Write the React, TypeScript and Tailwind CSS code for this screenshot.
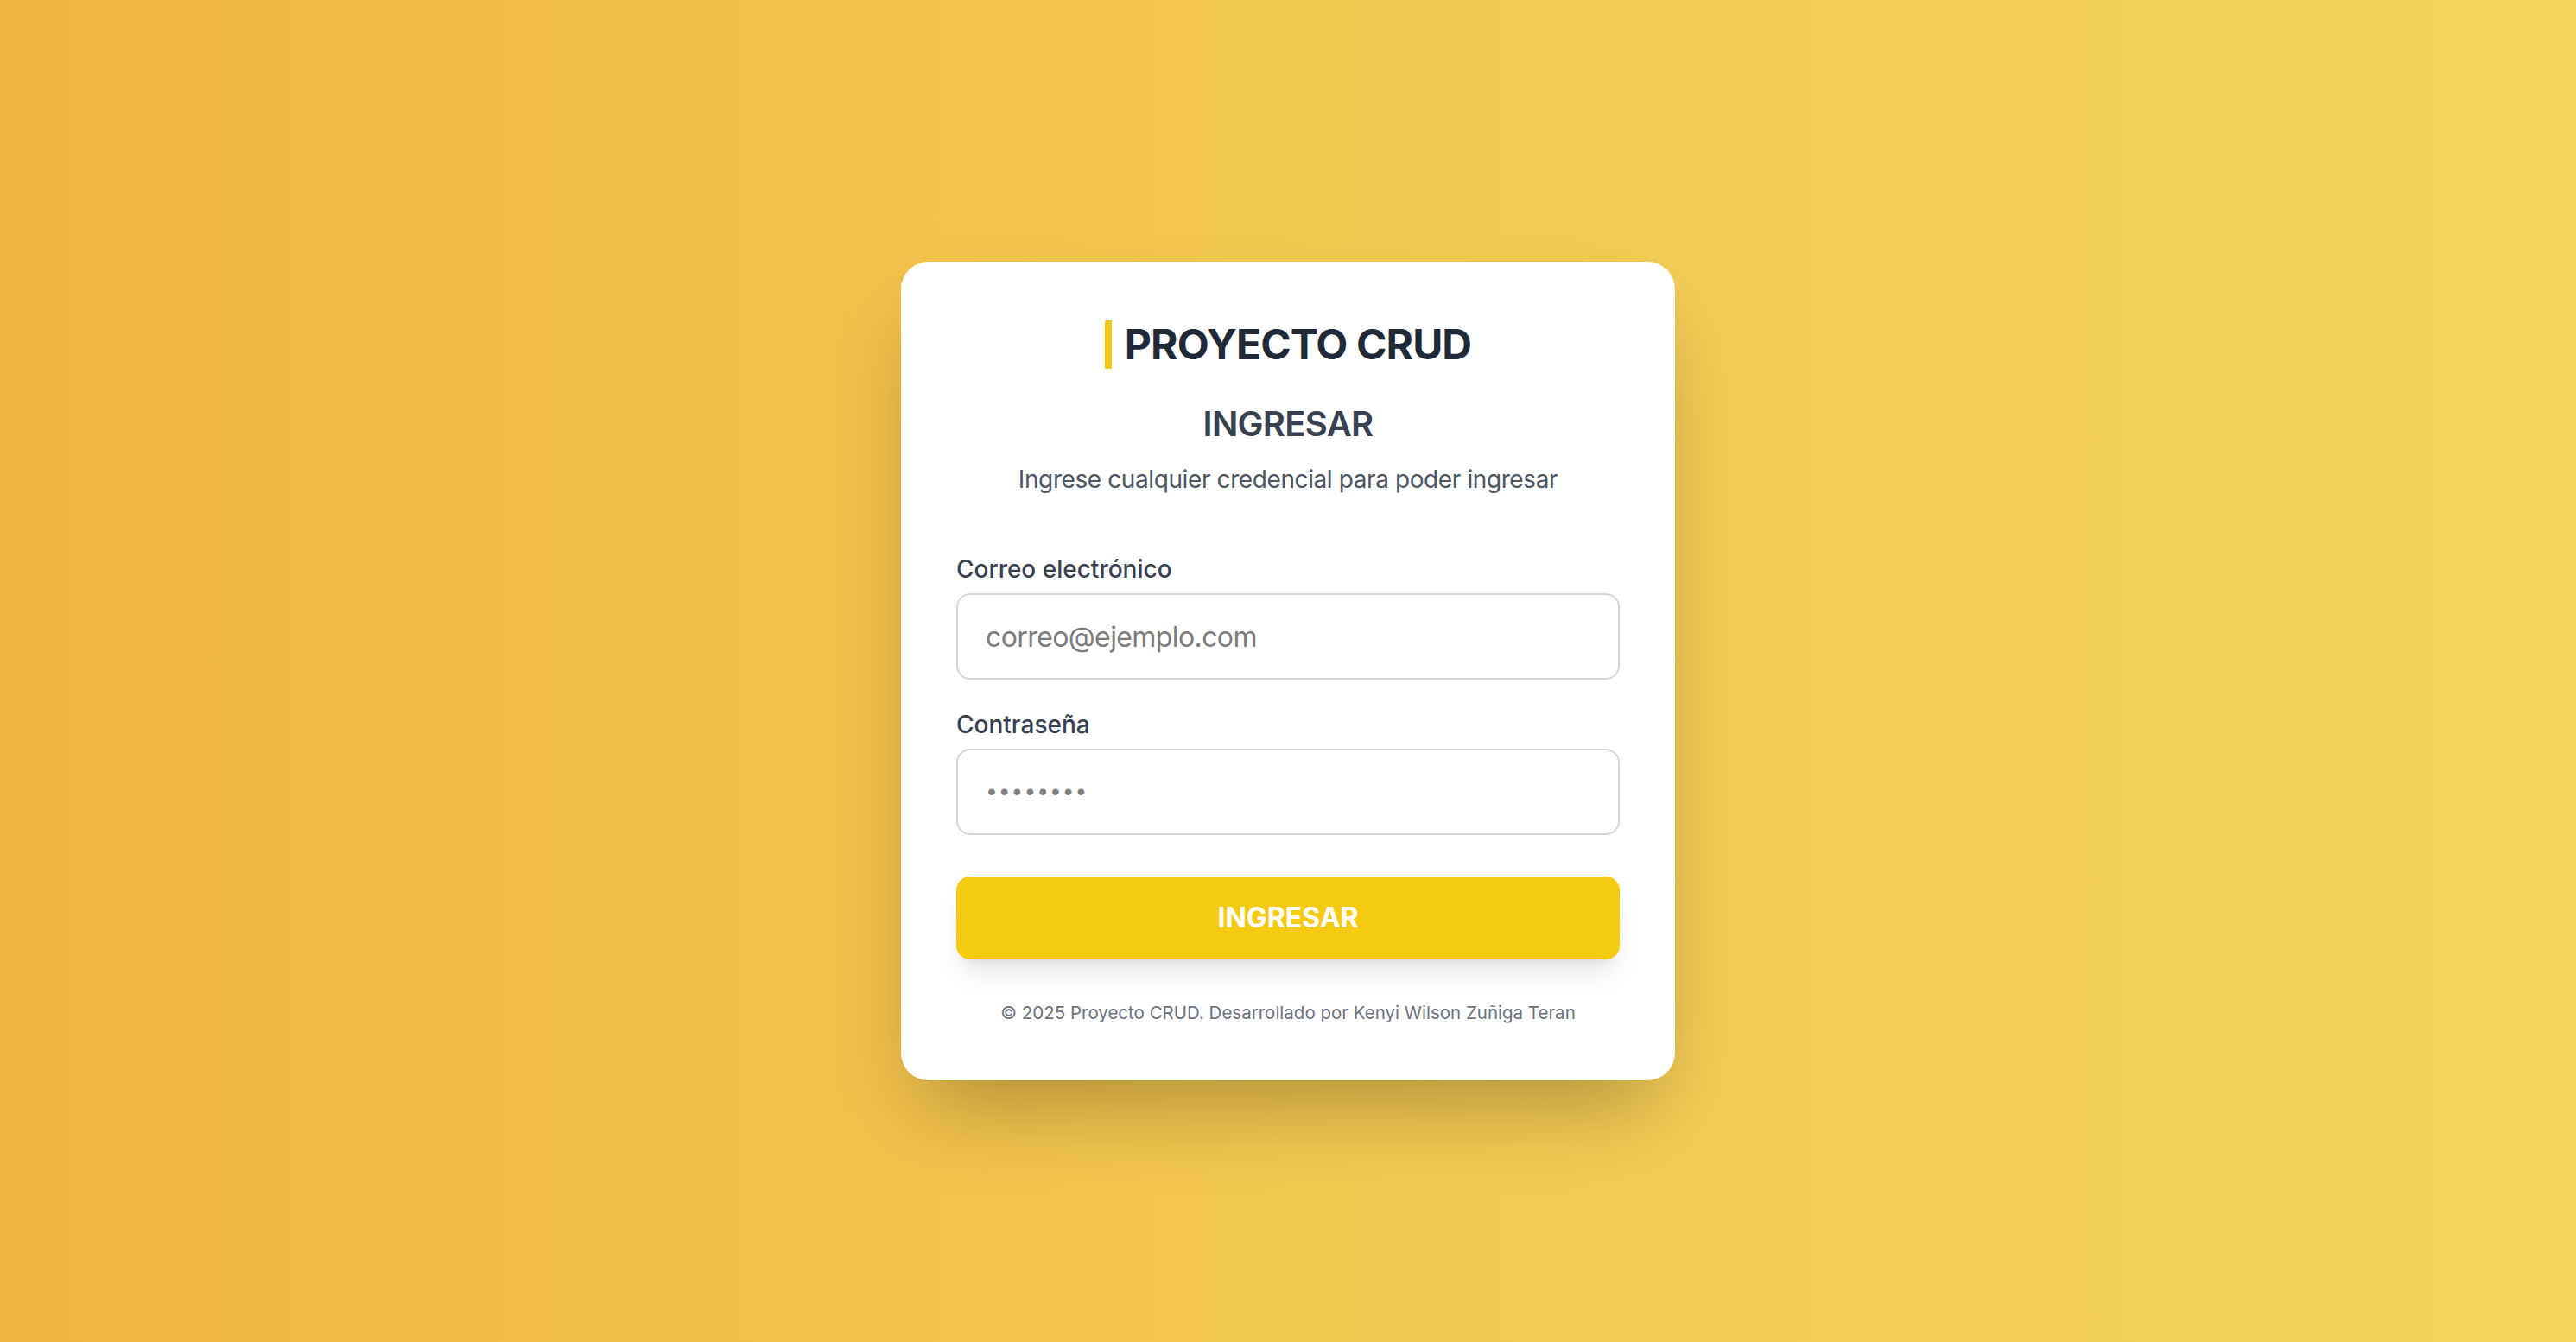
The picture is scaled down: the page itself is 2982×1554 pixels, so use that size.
export default function App() {
  return (
    <div className="flex min-h-screen w-full items-center justify-center bg-[linear-gradient(to_right,#f2b441,#f2c851_50%,#f2d65f)] font-['Inter',sans-serif]">
      <div className="w-[896px] rounded-[32px] bg-white px-[64px] py-[64px] shadow-[0_50px_100px_-24px_rgba(0,0,0,0.28)]">
        <div className="flex h-[64px] items-center justify-center gap-[15px]">
          <span className="h-[56px] w-[8px] bg-[#f5c710]" />
          <h1 className="text-[48px] leading-[64px] font-bold tracking-[-0.9px] text-[#1f2937]">
            PROYECTO CRUD
          </h1>
        </div>

        <h2 className="mt-[32px] text-center text-[40px] leading-[56px] font-semibold tracking-[-0.7px] text-[#374151]">
          INGRESAR
        </h2>
        <p className="mt-[16px] text-center text-[28px] leading-[40px] tracking-[-0.4px] text-[#4b5563]">
          Ingrese cualquier credencial para poder ingresar
        </p>

        <form className="mt-[64px]" onSubmit={(e) => e.preventDefault()}>
          <label className="block text-[28px] leading-[40px] font-medium text-[#374151]">
            Correo electrónico
          </label>
          <input
            type="email"
            placeholder="correo@ejemplo.com"
            className="mt-[8px] block h-[100px] w-full rounded-[16px] border-2 border-[#d4d6db] bg-white px-[32px] text-[32px] tracking-[-0.6px] text-[#1f2937] outline-none placeholder:text-[#7b7b7b]"
          />

          <label className="mt-[32px] block text-[28px] leading-[40px] font-medium text-[#374151]">
            Contraseña
          </label>
          <input
            type="password"
            placeholder="••••••••"
            className="mt-[8px] block h-[100px] w-full rounded-[16px] border-2 border-[#d4d6db] bg-white px-[34px] font-['Liberation_Sans',sans-serif] text-[28px] tracking-[5px] text-[#1f2937] outline-none placeholder:text-[#808080]"
          />

          <button
            type="submit"
            className="mt-[48px] h-[96px] w-full rounded-[16px] bg-[#f5ca12] text-[32px] font-bold text-white shadow-[0_20px_30px_-6px_rgba(0,0,0,0.1),0_8px_12px_-8px_rgba(0,0,0,0.1)]"
          >
            INGRESAR
          </button>
        </form>

        <p className="mt-[48px] text-center text-[20.5px] leading-[28px] text-[#6b7280]">
          © 2025 Proyecto CRUD. Desarrollado por Kenyi Wilson Zuñiga Teran
        </p>
      </div>
    </div>
  );
}
